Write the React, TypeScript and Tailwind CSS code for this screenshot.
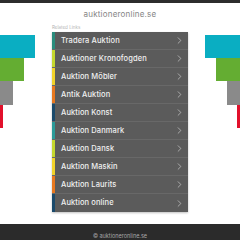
import { ChevronRight } from "lucide-react";

const links = [
  { label: "Tradera Auktion", strip: "bg-[#2a8c7c]" },
  { label: "Auktioner Kronofogden", strip: "bg-[#c3d72e]" },
  { label: "Auktion Möbler", strip: "bg-[#f0d22a]" },
  { label: "Antik Auktion", strip: "bg-[#e8781e]" },
  { label: "Auktion Konst", strip: "bg-[#1b4a6b]" },
  { label: "Auktion Danmark", strip: "bg-[#2b9a98]" },
  { label: "Auktion Dansk", strip: "bg-[#c3d72e]" },
  { label: "Auktion Maskin", strip: "bg-[#f0d22a]" },
  { label: "Auktion Laurits", strip: "bg-[#e8781e]" },
  { label: "Auktion online", strip: "bg-[#1b4a6b]" },
];

export default function App() {
  return (
    <div className="w-[240px] h-[240px] bg-white overflow-hidden flex flex-col font-['Inter',sans-serif]">
      <div className="h-[3px] bg-[#2d2d2d]" />
      <div className="h-[21px] flex items-center justify-center text-[8px] tracking-[0.2px] text-[#858585]">
        auktioneronline.se
      </div>

      <div className="flex">
        {/* left bars */}
        <div className="w-[52px] flex flex-col items-start pt-[11px]">
          <div className="h-[23px] w-[35px] bg-[#0aaec2]" />
          <div className="h-[23px] w-[24px] bg-[#64ad32]" />
          <div className="h-[24px] w-[13px] bg-[#8a8a8a]" />
          <div className="h-[23px] w-[3px] bg-[#e2102b]" />
        </div>

        {/* links */}
        <div className="w-[136px] flex flex-col">
          <div className="h-[8px] text-[4.5px] leading-[8px] text-[#b4b4b4]">Related Links</div>
          <div className="flex flex-col bg-[#5b5b5b] shadow-[0_1px_2px_rgba(0,0,0,0.25)]">
            {links.map((l) => (
              <div key={l.label} className="h-[18px] flex border-b border-[#686868] last:border-b-0">
                <div className={`w-[3px] ${l.strip}`} />
                <div className="flex-1 flex items-center justify-between pl-[6px] pr-[3px]">
                  <span className="text-[7.5px] font-medium tracking-[0.1px] text-[#f0f0f0]">{l.label}</span>
                  <ChevronRight size={11} strokeWidth={1.3} className="text-[#dedede]" />
                </div>
              </div>
            ))}
          </div>
        </div>

        {/* right bars */}
        <div className="w-[52px] flex flex-col items-end pt-[11px]">
          <div className="h-[23px] w-[35px] bg-[#0aaec2]" />
          <div className="h-[23px] w-[24px] bg-[#64ad32]" />
          <div className="h-[24px] w-[13px] bg-[#8a8a8a]" />
          <div className="h-[23px] w-[3px] bg-[#e2102b]" />
        </div>
      </div>

      <div className="mt-auto h-[16px] bg-[#2b2b2b] flex justify-center pt-[9px]">
        <span className="text-[5.5px] leading-[7px] text-[#a8a8a8]">© auktioneronline.se</span>
      </div>
    </div>
  );
}
